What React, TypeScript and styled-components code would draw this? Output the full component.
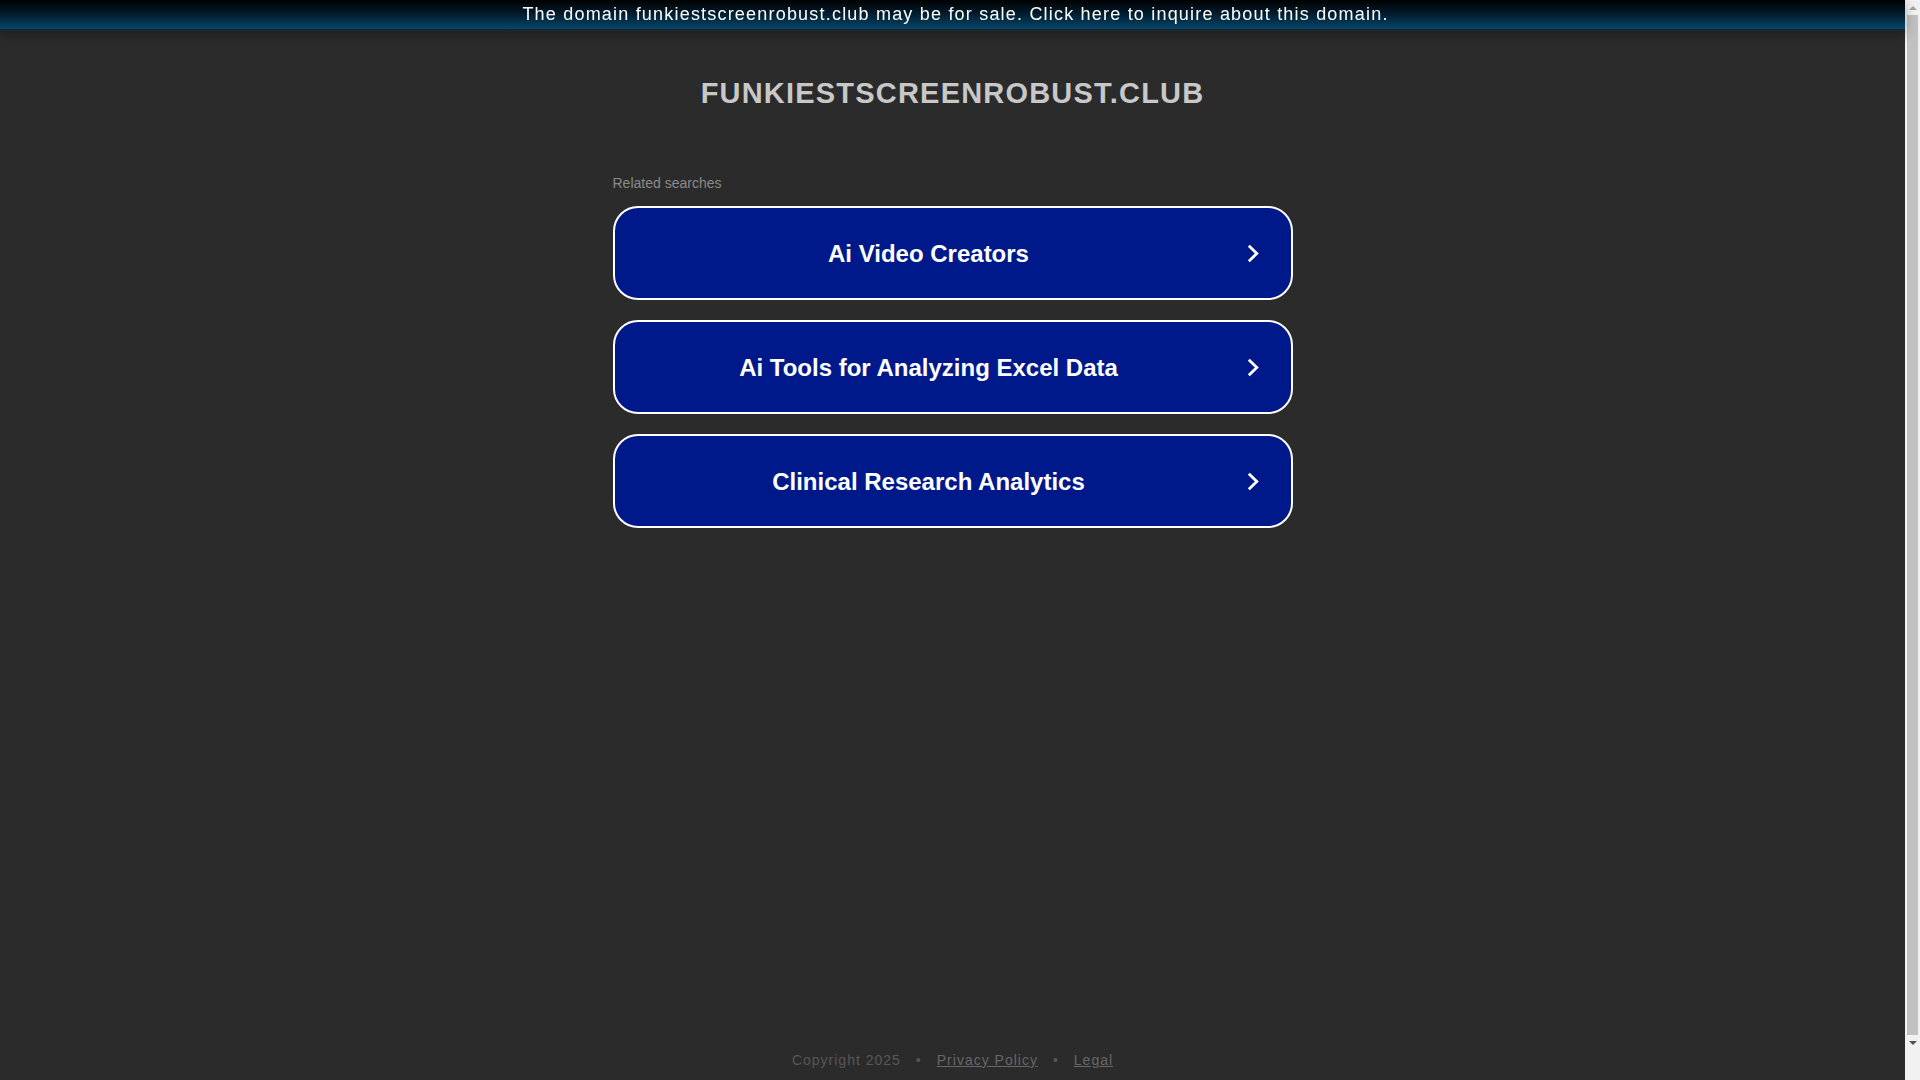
import styled, { createGlobalStyle } from 'styled-components';

const searches = ['Ai Video Creators', 'Ai Tools for Analyzing Excel Data', 'Clinical Research Analytics'];

const GlobalStyle = createGlobalStyle`
  html, body {
    margin: 0;
    padding: 0;
    background-color: #2b2b2b;
  }

  html {
    overflow: hidden;
  }

  * {
    box-sizing: border-box;
  }
`;

const Chevron = () => (
  <svg width="12" height="19" viewBox="0 0 12 19" fill="none">
    <polyline points="1.8,1.8 9.8,9.5 1.8,17.2" stroke="#ffffff" strokeWidth="2.8" strokeLinejoin="miter" />
  </svg>
);

const App = () => {
  return (
    <>
      <GlobalStyle />
      <Page>
        <Banner>The domain funkiestscreenrobust.club may be for sale. Click here to inquire about this domain.</Banner>
        <Main>
          <DomainTitle>FUNKIESTSCREENROBUST.CLUB</DomainTitle>
          <SearchWrap>
            <SearchLabel>Related searches</SearchLabel>
            <SearchList>
              {searches.map((item, index) => (
                <SearchItem key={index} href="#">
                  <SearchText>{item}</SearchText>
                  <Chevron />
                </SearchItem>
              ))}
            </SearchList>
          </SearchWrap>
          <Footer>
            <span>Copyright 2025</span>
            <Dot>•</Dot>
            <FooterLink href="#">Privacy Policy</FooterLink>
            <Dot>•</Dot>
            <FooterLink href="#">Legal</FooterLink>
          </Footer>
        </Main>
      </Page>
      <ScrollTrack>
        <ScrollArrow $dir="up" />
        <ScrollThumb />
        <ScrollArrow $dir="down" />
      </ScrollTrack>
    </>
  );
};

const Page = styled.div`
  width: calc(100% - 15px);
`;

const Banner = styled.div`
  width: 100%;
  height: 32px;
  padding-left: 6px;
  line-height: 29px;
  background: linear-gradient(#000000 0%, #021b2c 45%, #05466b 100%);
  background-size: 100% 29px;
  background-repeat: no-repeat;
  border-bottom: 3px solid #1d252a;
  box-shadow: 0 3px 12px rgba(0, 0, 0, 0.3);
  color: #ffffff;
  font-family: 'Liberation Sans', Arial, sans-serif;
  font-size: 18px;
  letter-spacing: 1.2px;
  text-align: center;
  white-space: nowrap;
  position: relative;
  z-index: 1;
`;

const Main = styled.div`
  min-height: calc(100vh - 32px);
  display: flex;
  flex-direction: column;
  align-items: center;
  font-family: 'Liberation Sans', Arial, sans-serif;
`;

const DomainTitle = styled.h1`
  margin: 43px 0 0;
  font-size: 29px;
  line-height: 36px;
  font-weight: 700;
  letter-spacing: 1.2px;
  color: #c8c8c8;
`;

const SearchWrap = styled.div`
  width: 680px;
  margin-top: 63px;
  display: flex;
  flex-direction: column;
  gap: 14px;
`;

const SearchLabel = styled.p`
  margin: 0;
  font-size: 14px;
  line-height: 18px;
  color: #8a8a8a;
`;

const SearchList = styled.div`
  display: flex;
  flex-direction: column;
  gap: 20px;
`;

const SearchItem = styled.a`
  height: 94px;
  display: flex;
  align-items: center;
  padding: 0 32px 0 0;
  background-color: #00198a;
  border: 2px solid #ffffff;
  border-radius: 25px;
  text-decoration: none;
`;

const SearchText = styled.span`
  flex: 1;
  margin-right: 4px;
  padding-top: 2px;
  text-align: center;
  font-size: 24px;
  font-weight: 700;
  color: #ffffff;
`;

const Footer = styled.div`
  margin-top: auto;
  padding-bottom: 11px;
  display: flex;
  align-items: center;
  gap: 15px;
  font-size: 14px;
  line-height: 18px;
  letter-spacing: 1px;
  color: #575757;
`;

const Dot = styled.span`
  color: #575757;
`;

const FooterLink = styled.a`
  color: #676767;
  text-decoration: underline;
`;

const ScrollTrack = styled.div`
  position: fixed;
  top: 0;
  right: 0;
  width: 15px;
  height: 100vh;
  display: flex;
  flex-direction: column;
  background-color: #f1f1f1;
`;

const ScrollArrow = styled.div<{ $dir: 'up' | 'down' }>`
  height: 15px;
  flex-shrink: 0;
  display: flex;
  align-items: center;
  justify-content: center;

  &::before {
    content: '';
    width: 0;
    height: 0;
    border-left: 4px solid transparent;
    border-right: 4px solid transparent;
    ${({ $dir }) =>
      $dir === 'up' ? 'border-bottom: 4px solid #a3a3a3;' : 'border-top: 4px solid #505050;'}
  }
`;

const ScrollThumb = styled.div`
  height: 1020px;
  margin: 0 2px;
  background-color: #c1c1c1;
`;

export default App;
